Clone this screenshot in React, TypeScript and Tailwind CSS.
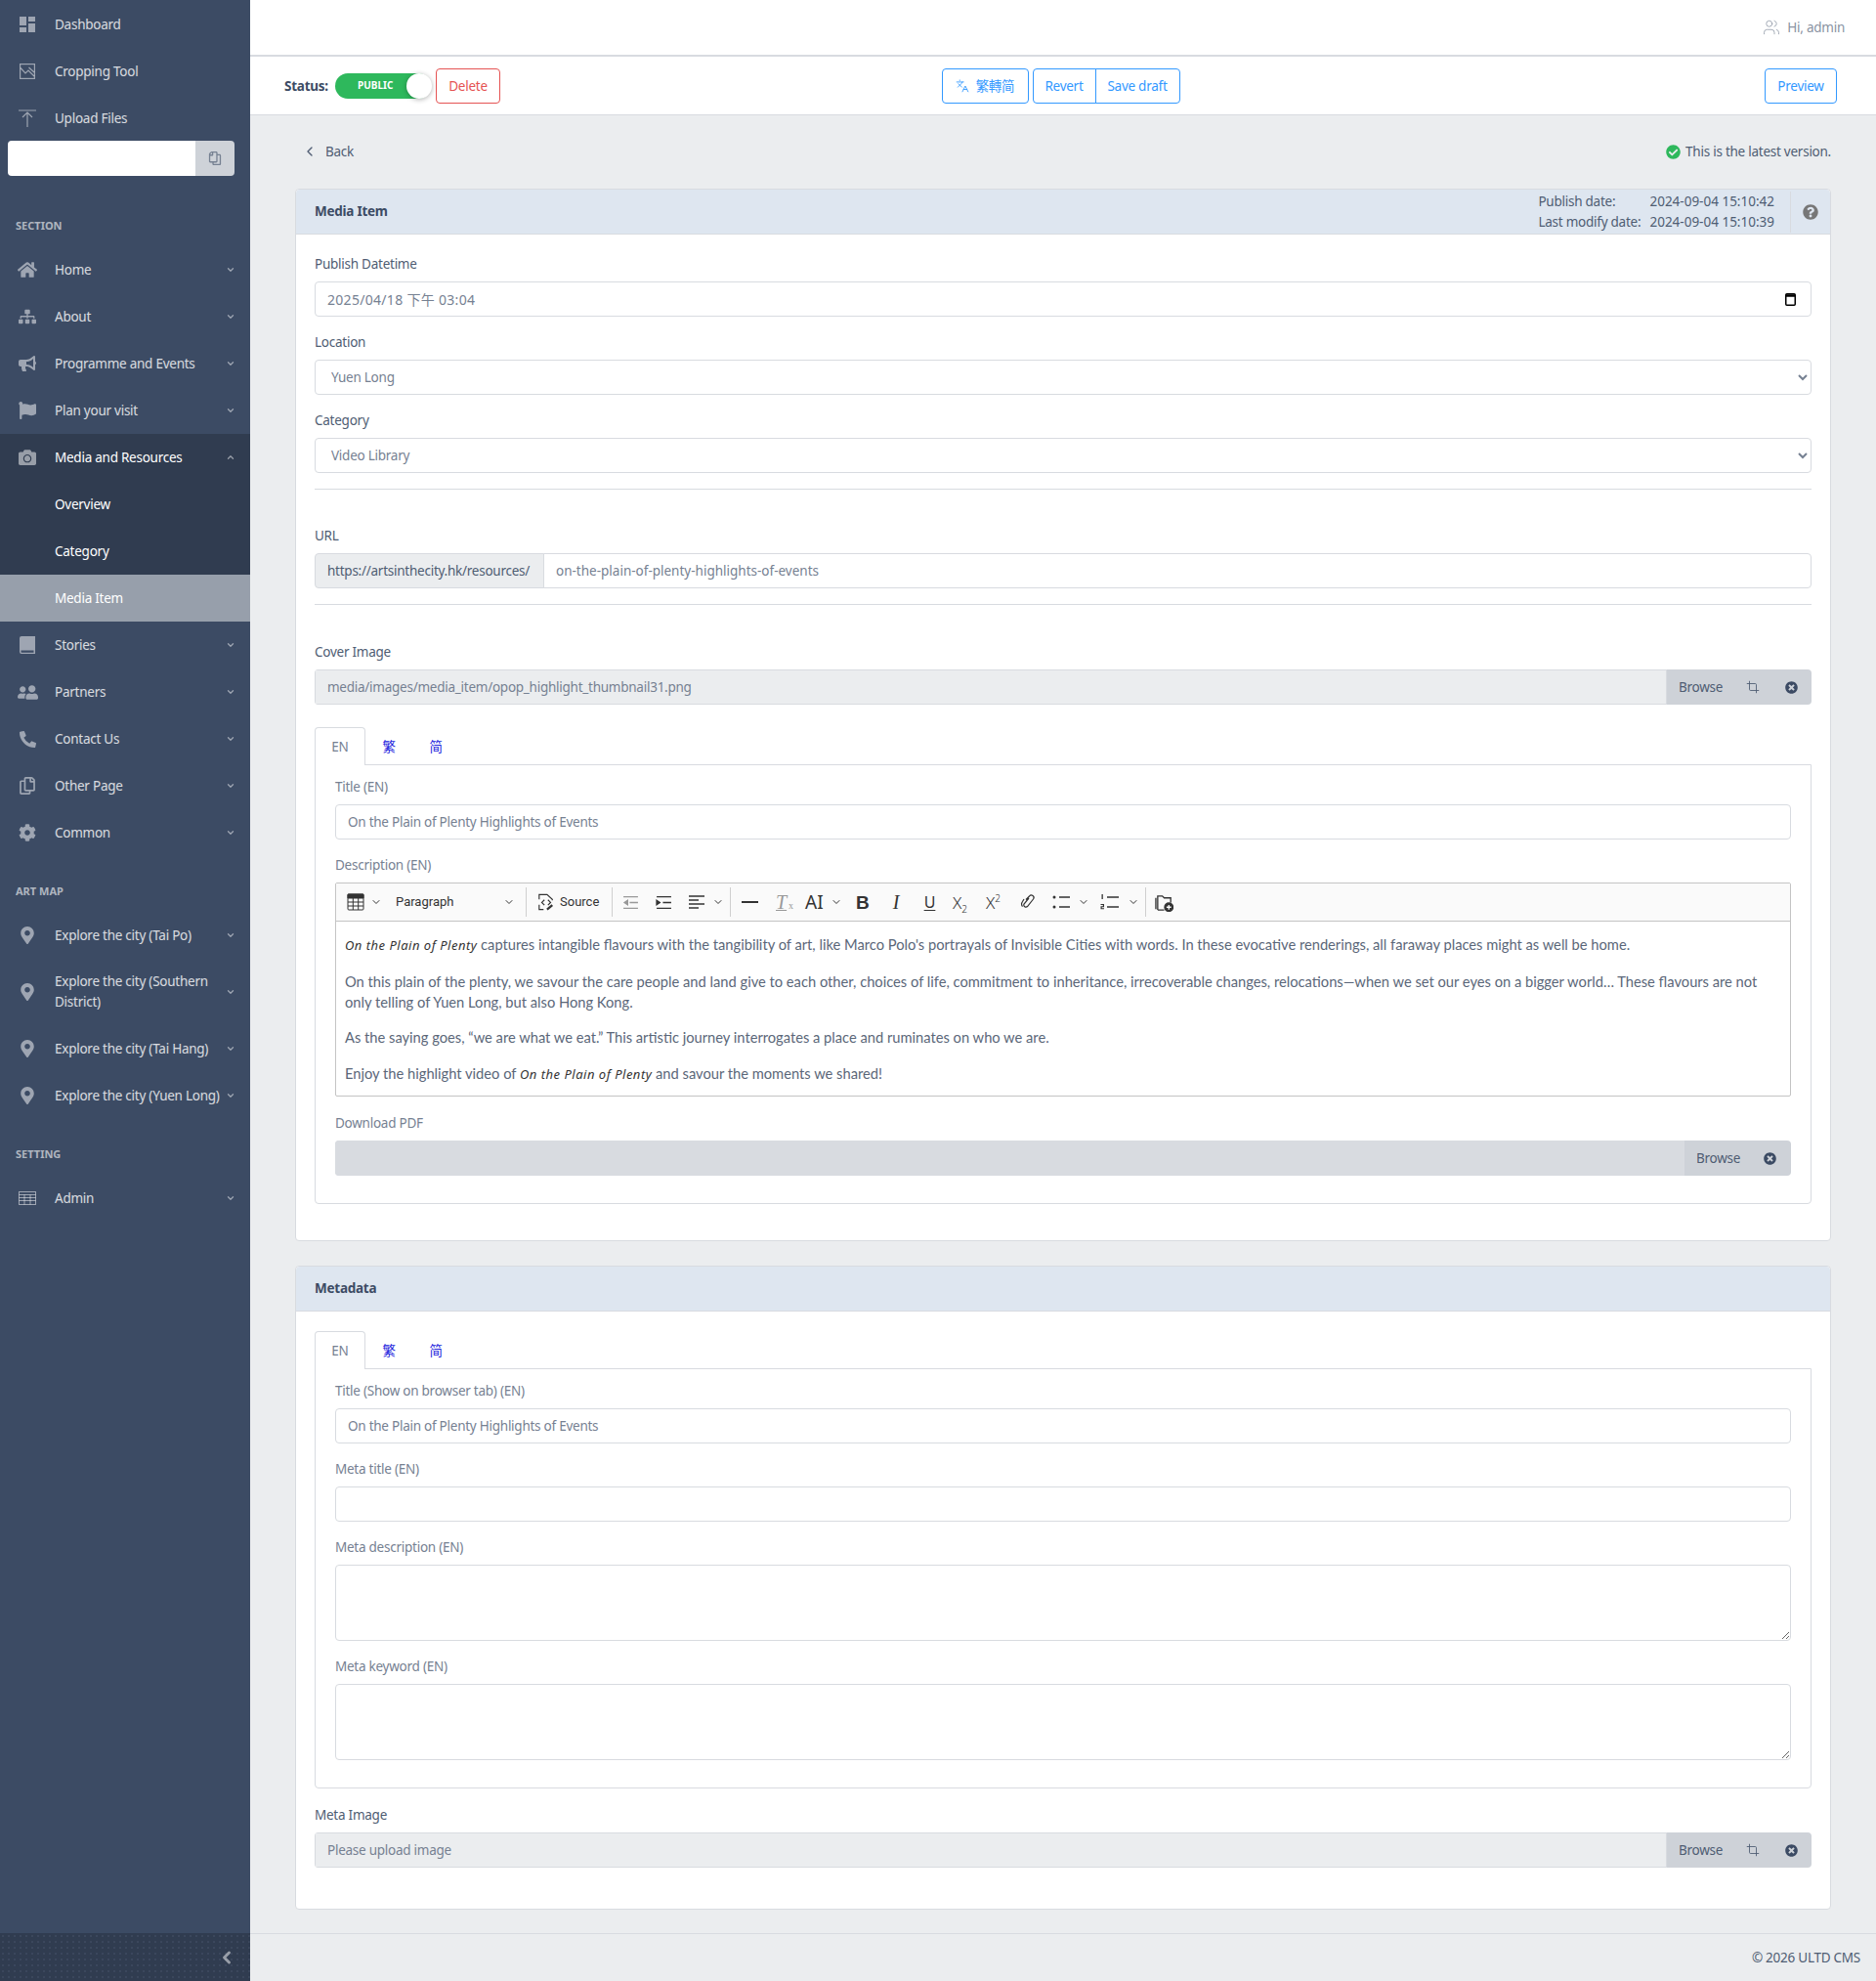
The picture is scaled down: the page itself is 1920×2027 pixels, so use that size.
import React from 'react';
import { Languages, Crop, ChevronDown, ChevronUp, ChevronLeft, Users } from 'lucide-react';
import {
	FaHome,
	FaSitemap,
	FaBullhorn,
	FaFlag,
	FaCamera,
	FaUserFriends,
	FaPhoneAlt,
	FaRegCopy,
	FaCog,
	FaMapMarkerAlt,
	FaTimesCircle,
	FaCheckCircle,
	FaQuestionCircle,
} from 'react-icons/fa';

type NavItem = { label: string; icon: React.ReactNode };

const ic = 'h-[18px] w-[18px]';

const topItems: NavItem[] = [
	{
		label: 'Dashboard',
		icon: (
			<svg viewBox="0 0 16 16" className="h-[16px] w-[16px]" fill="currentColor">
				<path d="M0 0h7v9H0zM9 0h7v5H9zM9 7h7v9H9zM0 11h7v5H0z" />
			</svg>
		),
	},
	{
		label: 'Cropping Tool',
		icon: (
			<svg viewBox="0 0 16 16" className="h-[16px] w-[16px]" fill="none" stroke="currentColor" strokeWidth="1.200">
				<rect x="0.600" y="0.600" width="14.800" height="14.800" />
				<path d="M1 4.500 6 10l3-3 6 6M9.500 4l5.500 5" />
			</svg>
		),
	},
	{
		label: 'Upload Files',
		icon: (
			<svg viewBox="0 0 18 18" className={ic} fill="none" stroke="currentColor" strokeWidth="1.200">
				<path d="M0 1h18M9 3v15M4 8l5-5 5 5" />
			</svg>
		),
	},
];

const sectionBefore: NavItem[] = [
	{ label: 'Home', icon: <FaHome className="h-[20px] w-[20px]" /> },
	{ label: 'About', icon: <FaSitemap className={ic} /> },
	{ label: 'Programme and Events', icon: <FaBullhorn className={ic} /> },
	{ label: 'Plan your visit', icon: <FaFlag className={ic} /> },
];

const sectionAfter: NavItem[] = [
	{
		label: 'Stories',
		icon: (
			<svg viewBox="0 0 16 18" className={ic} fill="currentColor">
				<path d="M2 0h14v18H2a2 2 0 0 1-2-2V2a2 2 0 0 1 2-2zM1.500 14.500V16c0 .4.300.700.700.700h12.300v-2.200z" fillRule="evenodd" />
			</svg>
		),
	},
	{ label: 'Partners', icon: <FaUserFriends className="h-[21px] w-[21px] -scale-x-100" /> },
	{ label: 'Contact Us', icon: <FaPhoneAlt className="h-[17px] w-[17px]" /> },
	{ label: 'Other Page', icon: <FaRegCopy className={ic} /> },
	{ label: 'Common', icon: <FaCog className={ic} /> },
];

const pin = <FaMapMarkerAlt className={ic} />;

const SideLink: React.FC<{ item: NavItem; chevron?: boolean }> = ({ item, chevron = true }) => (
	<div className="flex min-h-12 items-center py-[13px] pr-[15px] text-white/80">
		<span className="flex w-14 shrink-0 items-center justify-center text-white/50">{item.icon}</span>
		<span className="flex-1 leading-[21px]">{item.label}</span>
		{chevron && <ChevronDown className="h-[10px] w-[10px] shrink-0 text-white/50" strokeWidth={3} />}
	</div>
);

const SideTitle: React.FC<{ children: React.ReactNode; className?: string }> = ({ children, className }) => (
	<div className={`h-[16px] px-4 text-[11px] leading-[16px] font-bold tracking-normal text-white/60 ${className ?? ''}`}>{children}</div>
);

const Sidebar: React.FC = () => (
	<aside className="flex w-64 shrink-0 flex-col bg-[#3c4b64]">
		<div className="pt-px">
			{topItems.map((i) => (
				<SideLink key={i.label} item={i} chevron={false} />
			))}
		</div>
		<div className="mx-2 -mt-px flex h-[36px] w-[232px] overflow-hidden rounded-[4px]">
			<div className="flex-1 bg-white" />
			<div className="flex w-10 items-center justify-center bg-[#ced2d8] text-[#768192]">
				<FaRegCopy className="h-[14px] w-[14px] -scale-x-100" />
			</div>
		</div>
		<SideTitle className="mt-[43px] mb-[13px]">SECTION</SideTitle>
		<div>
			{sectionBefore.map((i) => (
				<SideLink key={i.label} item={i} />
			))}
			<div className="bg-[#303c50] text-white">
				<div className="flex h-12 items-center pr-[15px]">
					<span className="flex w-14 items-center justify-center text-white/50">
						<FaCamera className={ic} />
					</span>
					<span className="flex-1">Media and Resources</span>
					<ChevronUp className="h-[10px] w-[10px] text-white/50" strokeWidth={3} />
				</div>
				<div className="flex h-12 items-center pl-14">Overview</div>
				<div className="flex h-12 items-center pl-14">Category</div>
			</div>
			<div className="flex h-12 items-center bg-[#979fab] pl-14 text-white">Media Item</div>
			{sectionAfter.map((i) => (
				<SideLink key={i.label} item={i} />
			))}
		</div>
		<SideTitle className="mt-[28px] mb-[13px]">ART MAP</SideTitle>
		<SideLink item={{ label: 'Explore the city (Tai Po)', icon: pin }} />
		<SideLink item={{ label: 'Explore the city (Southern District)', icon: pin }} />
		<SideLink item={{ label: 'Explore the city (Tai Hang)', icon: pin }} />
		<SideLink item={{ label: 'Explore the city (Yuen Long)', icon: pin }} />
		<SideTitle className="mt-[28px] mb-[13px]">SETTING</SideTitle>
		<SideLink
			item={{
				label: 'Admin',
				icon: (
					<svg viewBox="0 0 18 14" className="h-[16px] w-[18px]" fill="none" stroke="currentColor" strokeWidth="1">
						<rect x="0.500" y="0.500" width="17" height="13" />
						<path d="M0.500 3.500h17M0.500 6.500h17M0.500 9.500h17M6 3.500v10M12 3.500v10" />
					</svg>
				),
			}}
		/>
		<div className="mt-auto flex h-[50px] items-center justify-end bg-[#303c50] bg-[radial-gradient(#47546b_0.6px,transparent_0.8px)] bg-[length:6px_6px] pr-[14px]">
			<ChevronLeft className="h-[20px] w-[20px] text-white/50" strokeWidth={3.5} />
		</div>
	</aside>
);

const Label: React.FC<{ children: React.ReactNode; muted?: boolean }> = ({ children, muted }) => (
	<div className={`mb-[7px] h-[21px] leading-[21px] ${muted ? 'text-[#768192]' : 'text-[#4f5d73]'}`}>{children}</div>
);

const inputCls = 'block h-[36px] w-full rounded-[4px] border border-[#d8dbe0] bg-white px-3 text-[#768192] outline-none';

const TextField: React.FC<{ label: string; value?: string; muted?: boolean }> = ({ label, value = '', muted }) => (
	<div className="mb-4">
		<Label muted={muted}>{label}</Label>
		<input readOnly value={value} className={inputCls} />
	</div>
);

const SelectField: React.FC<{ label: string; value: string }> = ({ label, value }) => (
	<div className="mb-4">
		<Label>{label}</Label>
		<select value={value} onChange={() => undefined} className={`${inputCls} pl-3`}>
			<option>{value}</option>
		</select>
	</div>
);

const TextAreaField: React.FC<{ label: string }> = ({ label }) => (
	<div className="mb-4">
		<Label muted>{label}</Label>
		<textarea readOnly className="block h-[78px] w-full rounded-[4px] border border-[#d8dbe0] bg-white" />
	</div>
);

const FileField: React.FC<{ label: string; value?: string; placeholder?: string; crop?: boolean; muted?: boolean; className?: string }> = ({
	label,
	value,
	placeholder,
	crop = true,
	muted,
	className,
}) => (
	<div className={className}>
		<Label muted={muted}>{label}</Label>
		<div className="flex h-[36px] overflow-hidden rounded-[4px] text-[#768192]">
			<div className={`flex flex-1 items-center border border-[#d8dbe0] px-3 ${crop ? 'bg-[#ebedef]' : 'bg-[#d8dbe0]'}`}>
				{value ?? placeholder}
			</div>
			<div className={`flex items-center bg-[#ced2d8] text-[#4f5d73] ${crop ? 'w-[148px] pl-[12px]' : 'w-[109px] pl-3'}`}>
				<span className="w-[45px]">Browse</span>
				{crop && <Crop className="ml-[24px] h-[14px] w-[14px]" strokeWidth={1.5} />}
				<FaTimesCircle className={`h-[13px] w-[13px] text-[#3c4b64] ${crop ? 'ml-[26px]' : 'ml-[24px]'}`} />
			</div>
		</div>
	</div>
);

const Tabs: React.FC = () => (
	<div className="relative z-10 flex h-[38px]">
		<div className="flex h-[39px] w-[52px] items-center justify-center rounded-t-[4px] border border-b-0 border-[#d8dbe0] bg-white text-[#768192]">EN</div>
		<div className="flex w-[48px] items-center justify-center text-[#2525dd] [font-family:'Noto_Sans_CJK_TC',sans-serif]">繁</div>
		<div className="flex w-[48px] items-center justify-center text-[#2525dd] [font-family:'Noto_Sans_CJK_SC',sans-serif]">简</div>
	</div>
);

const CardHeader: React.FC<{ title: string; children?: React.ReactNode }> = ({ title, children }) => (
	<div className="flex h-[46px] items-center rounded-t-[4px] border-b border-[#d8dbe0] bg-[#dee6f0] pl-[19px] font-bold text-[#3c4b64]">
		<span className="flex-1">{title}</span>
		{children}
	</div>
);

const Sep: React.FC<{ className?: string }> = ({ className }) => <span className={`h-[30px] w-px shrink-0 bg-[#cfcfcf] ${className ?? ''}`} />;

const Caret: React.FC<{ className?: string }> = ({ className }) => (
	<ChevronDown className={`h-[12px] w-[12px] shrink-0 text-[#333] ${className ?? ''}`} strokeWidth={2} />
);

// margins below follow the ckeditor toolbar's pixel rhythm in the screenshot
const EditorToolbar: React.FC = () => (
	<div className="flex h-[39px] items-center border-b border-[#c4c4c4] bg-[#fafafa] pl-[11px] text-[13px] tracking-normal text-[#333]">
		<svg viewBox="0 0 18 18" className="h-[18px] w-[18px] shrink-0" fill="none" stroke="#333" strokeWidth="1">
			<rect x="1" y="1" width="16" height="16" rx="1" />
			<path d="M1 1h16v4H1z" fill="#333" />
			<path d="M1 9h16M1 13h16M6.300 5v12M11.700 5v12" />
		</svg>
		<Caret className="ml-[6px]" />
		<span className="ml-[14px] w-[110px] [font-family:Roboto,sans-serif]">Paragraph</span>
		<Caret />
		<Sep className="ml-[11px]" />
		<svg viewBox="0 0 20 20" className="ml-[11px] h-[18px] w-[18px] shrink-0" fill="none" stroke="#333" strokeWidth="1.300">
			<path d="M2 7V1.500h9l6 5.500v1M2 13v5.500h5M8 7.500 5 10.500 8 13.500M12 7.500l3 3-3 3" />
			<path d="M11 18.500l6-5" strokeWidth="2.500" />
		</svg>
		<span className="ml-[5px] w-[41px] [font-family:Roboto,sans-serif]">Source</span>
		<Sep className="ml-[12px]" />
		<svg viewBox="0 0 16 16" className="ml-[10px] h-[17px] w-[17px] shrink-0" fill="none" stroke="#999" strokeWidth="1.300">
			<path d="M1 2.500h14M7 8h8M1 13.500h14" />
			<path d="M5 6 2 8l3 2z" fill="#999" />
		</svg>
		<svg viewBox="0 0 16 16" className="ml-[17px] h-[17px] w-[17px] shrink-0" fill="none" stroke="#333" strokeWidth="1.300">
			<path d="M1 2.500h14M7 8h8M1 13.500h14" />
			<path d="M1 6l3 2-3 2z" fill="#333" />
		</svg>
		<svg viewBox="0 0 16 16" className="ml-[17px] h-[16px] w-[16px] shrink-0" fill="none" stroke="#333" strokeWidth="1.300">
			<path d="M0 2h16M0 6h10M0 10h16M0 14h10" />
		</svg>
		<Caret className="ml-[8px]" />
		<Sep className="ml-[6px]" />
		<span className="ml-[11px] h-[2px] w-[17px] shrink-0 bg-[#333]" />
		<span className="relative ml-[18px] w-[16px] shrink-0 text-[20px] leading-none text-[#999] italic underline decoration-1 underline-offset-1 [font-family:'Liberation_Serif',serif]">
			T<span className="absolute -right-[2px] bottom-[1px] text-[10px] not-italic">x</span>
		</span>
		<span className="ml-[14px] w-[19px] shrink-0 text-[19px] leading-none [font-family:'Noto_Sans',sans-serif]">AI</span>
		<Caret className="ml-[7px]" />
		<span className="ml-[14px] w-[13px] shrink-0 text-center text-[19px] leading-none font-bold [font-family:'Liberation_Sans',sans-serif]">B</span>
		<span className="ml-[23px] w-[10px] shrink-0 text-center text-[20px] leading-none italic [font-family:'Liberation_Serif',serif]">I</span>
		<span className="ml-[23px] w-[13px] shrink-0 text-center text-[16px] leading-none underline underline-offset-2 [font-family:'Noto_Sans',sans-serif]">U</span>
		<span className="ml-[17px] w-[18px] shrink-0 text-[17px] leading-none font-light [font-family:'Noto_Sans',sans-serif]">
			X<span className="relative top-[4px] text-[10px]">2</span>
		</span>
		<span className="ml-[16px] w-[18px] shrink-0 text-[17px] leading-none font-light [font-family:'Noto_Sans',sans-serif]">
			X<span className="relative -top-[7px] text-[10px]">2</span>
		</span>
		<svg viewBox="0 0 16 16" className="ml-[17px] h-[16px] w-[16px] shrink-0" fill="none" stroke="#333" strokeWidth="1.200">
			<path d="M6 5.500 9.500 2a2.400 2.400 0 0 1 4 3l-6 7.500a2.200 2.200 0 0 1-3.500-2.500l5-6" />
			<path d="M4 5 2.500 7.500a4 4 0 0 0 0 5" />
		</svg>
		<svg viewBox="0 0 18 16" className="ml-[17px] h-[16px] w-[18px] shrink-0" fill="#333">
			<circle cx="2" cy="3" r="1.500" />
			<circle cx="2" cy="13" r="1.500" />
			<path d="M7 2.300h11v1.400H7zM7 12.300h11v1.400H7z" />
		</svg>
		<Caret className="ml-[8px]" />
		<svg viewBox="0 0 19 16" className="ml-[11px] h-[16px] w-[19px] shrink-0" fill="#333">
			<path d="M7 2.300h12v1.400H7zM7 12.300h12v1.400H7z" />
			<path d="M1.500 0h1.300v5H1.500zM.5 10h3.500v3.200H1.700v1H4v1H.5v-3h2.300v-1.200H.5z" />
		</svg>
		<Caret className="ml-[9px]" />
		<Sep className="ml-[6px]" />
		<svg viewBox="0 0 20 20" className="ml-[9px] h-[19px] w-[19px] shrink-0" fill="none" stroke="#333" strokeWidth="1.400">
			<path d="M3 18V3h5l2 2h7v5M3 18h7M1 17V5" />
			<circle cx="15" cy="15" r="4.500" fill="#333" />
			<path d="M15 12.500v5M12.500 15h5" stroke="#fff" />
		</svg>
	</div>
);

const titleFont = "[font-family:'Noto_Sans',sans-serif] italic tracking-[0.5px] text-[#333] text-[13px]";

const EditorBody: React.FC = () => (
	<div className="h-[178px] pt-[13px] pr-[24px] pl-[9px] text-[14.7px] leading-[21px] tracking-normal text-[#5b6779] [font-family:Lato,sans-serif]">
		<p className="mb-[15.500px]">
			<span className={titleFont}>On the Plain of Plenty</span> captures intangible flavours with the tangibility of art, like Marco Polo's portrayals of Invisible Cities with words. In these evocative renderings, all faraway places might as well be home.
		</p>
		<p className="mb-[15.500px]">
			On this plain of the plenty, we savour the care people and land give to each other, choices of life, commitment to inheritance, irrecoverable changes, relocations—when we set our eyes on a bigger world… These flavours are not only telling of Yuen Long, but also Hong Kong.
		</p>
		<p className="mb-[15.500px]">As the saying goes, “we are what we eat.” This artistic journey interrogates a place and ruminates on who we are.</p>
		<p>
			Enjoy the highlight video of <span className={titleFont}>On the Plain of Plenty</span> and savour the moments we shared!
		</p>
	</div>
);

const TopBar: React.FC = () => (
	<>
		<header className="flex h-[58px] shrink-0 items-center justify-end border-b-2 border-[#d8dbe0] bg-white pr-[32px] text-[#8a93a2]">
			<Users className="mr-[7px] h-[18px] w-[18px]" strokeWidth={1} />
			Hi, admin
		</header>
		<div className="flex h-[60px] shrink-0 items-center border-b border-[#d8dbe0] bg-white pr-[40px] pl-[35px]">
			<div className="flex flex-1 items-center">
				<span className="mt-px mr-2 w-[44px] font-bold whitespace-nowrap text-[#3c4b64]">Status:</span>
				<div className="relative flex h-[26px] w-[98px] items-center rounded-full bg-[#2eb85c] pl-[23px] text-[10px] font-bold tracking-normal text-white">
					PUBLIC
					<span className="absolute -right-[1px] top-0 h-[26px] w-[26px] rounded-full bg-white shadow-[0_1px_5px_rgba(0,0,0,0.3)]" />
				</div>
				<button className="ml-[5px] h-[36px] w-[66px] rounded-[4px] border border-[#e55353] pt-px text-[#e55353]">Delete</button>
			</div>
			<div className="flex items-center text-[#3399ff]">
				<button className="flex h-[36px] w-[89px] items-center justify-center gap-[7px] rounded-[4px] border border-[#3399ff]">
					<Languages className="h-[14px] w-[14px]" strokeWidth={1.5} />
					<span className="[font-family:'Noto_Sans_CJK_TC',sans-serif]">繁轉简</span>
				</button>
				<button className="ml-[4px] h-[36px] w-[65px] rounded-l-[4px] border border-[#3399ff] pt-px">Revert</button>
				<button className="-ml-px h-[36px] w-[87px] rounded-r-[4px] border border-[#3399ff] pt-px">Save draft</button>
			</div>
			<div className="flex flex-1 justify-end">
				<button className="h-[36px] w-[74px] rounded-[4px] border border-[#3399ff] pt-px text-[#3399ff]">Preview</button>
			</div>
		</div>
	</>
);

const App: React.FC = () => (
	<div className="flex min-h-[2027px] bg-[#ebedef] text-[13.5px] tracking-[-0.25px] [font-family:'Noto_Sans','Noto_Sans_CJK_TC',sans-serif]">
		<Sidebar />
		<div className="flex min-w-0 flex-1 flex-col">
			<TopBar />
			<main className="flex flex-1 flex-col px-[46px]">
				<div className="flex h-[75px] items-center justify-between pb-[1px] text-[#4f5d73]">
					<span className="ml-[7px] flex items-center gap-[8px]">
						<ChevronLeft className="h-[16px] w-[16px]" strokeWidth={2} />
						Back
					</span>
					<span className="flex items-center">
						<FaCheckCircle className="mr-[5px] h-[15px] w-[15px] text-[#2eb85c]" />
						This is the latest version.
					</span>
				</div>

				<section className="mb-[25px] rounded-[4px] border border-[#d8dbe0] bg-white">
					<CardHeader title="Media Item">
						<div className="grid grid-cols-[114px_auto] leading-[21px] font-normal tracking-normal text-[#4f5d73]">
							<span className="tracking-[-0.25px]">Publish date:</span>
							<span>2024-09-04 15:10:42</span>
							<span className="tracking-[-0.25px]">Last modify date:</span>
							<span>2024-09-04 15:10:39</span>
						</div>
						<div className="ml-[16px] flex h-[42px] w-[41px] items-center justify-center border-l border-[#d8dbe0]">
							<FaQuestionCircle className="h-[16px] w-[16px] text-[#777]" />
						</div>
					</CardHeader>
					<div className="px-[19px] pt-[20px] pb-[37px]">
						<div className="mb-4">
							<Label>Publish Datetime</Label>
							<div className={`${inputCls} flex items-center justify-between pr-[15px]`}>
								<span className="text-[14px] tracking-[0.3px]">2025/04/18 下午 03:04</span>
								<svg viewBox="0 0 11 14" className="h-[14px] w-[11px]" fill="none" stroke="#000" strokeWidth="1.500">
									<rect x="0.750" y="1.750" width="9.500" height="11.500" rx="1" />
									<path d="M1 3.500h9" strokeWidth="2.500" />
								</svg>
							</div>
						</div>
						<SelectField label="Location" value="Yuen Long" />
						<SelectField label="Category" value="Video Library" />
						<hr className="mb-[37px] border-[#d8dbe0]" />
						<div className="mb-[16px]">
							<Label>URL</Label>
							<div className="flex h-[36px]">
								<span className="flex w-[235px] items-center rounded-l-[4px] border border-[#d8dbe0] bg-[#ebedef] px-3 text-[#4f5d73]">https://artsinthecity.hk/resources/</span>
								<input readOnly value="on-the-plain-of-plenty-highlights-of-events" className="-ml-px flex-1 rounded-r-[4px] border border-[#d8dbe0] px-3 tracking-normal text-[#768192] outline-none" />
							</div>
						</div>
						<hr className="mb-[38px] border-[#d8dbe0]" />
						<FileField label="Cover Image" value="media/images/media_item/opop_highlight_thumbnail31.png" className="mb-[23px]" />
						<Tabs />
						<div className="rounded-b-[4px] border border-[#d8dbe0] px-5 pt-[12px] pb-[28px]">
							<TextField label="Title (EN)" value="On the Plain of Plenty Highlights of Events" muted />
							<Label muted>Description (EN)</Label>
							<div className="mb-[17px] overflow-hidden rounded-[2px] border border-[#c4c4c4]">
								<EditorToolbar />
								<EditorBody />
							</div>
							<FileField label="Download PDF" crop={false} muted />
						</div>
					</div>
				</section>

				<section className="mb-[24px] rounded-[4px] border border-[#d8dbe0] bg-white">
					<CardHeader title="Metadata" />
					<div className="px-[19px] pt-[20px] pb-[42px]">
						<Tabs />
						<div className="mb-[17px] rounded-b-[4px] border border-[#d8dbe0] px-5 pt-[12px] pb-[12px]">
							<TextField label="Title (Show on browser tab) (EN)" value="On the Plain of Plenty Highlights of Events" muted />
							<TextField label="Meta title (EN)" muted />
							<TextAreaField label="Meta description (EN)" />
							<TextAreaField label="Meta keyword (EN)" />
						</div>
						<FileField label="Meta Image" placeholder="Please upload image" />
					</div>
				</section>

				<footer className="-mx-[46px] mt-auto flex h-[50px] items-center justify-end border-t border-[#d8dbe0] pr-4 text-[#4f5d73]">© 2026 ULTD CMS</footer>
			</main>
		</div>
	</div>
);

export default App;
